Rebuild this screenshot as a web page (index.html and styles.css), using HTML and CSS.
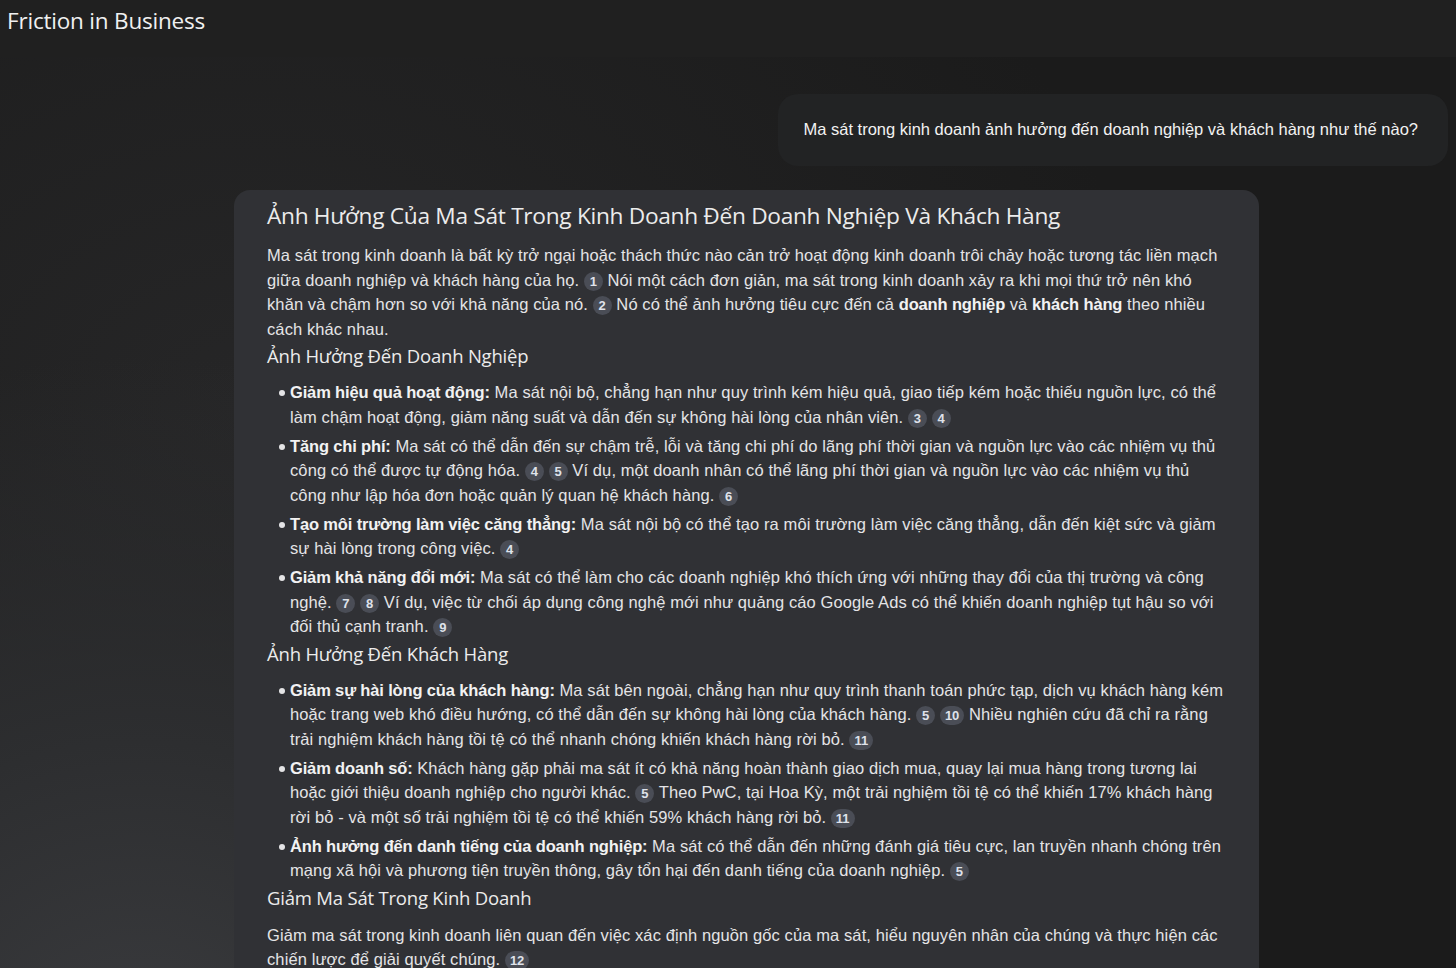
FILE: index.html
```html
<!DOCTYPE html>
<html lang="vi">
<head>
    <meta charset="UTF-8">
    <meta name="viewport" content="width=device-width, initial-scale=1.0">
    <title>Friction in Business</title>
    <link rel="stylesheet" href="styles.css">
</head>
<body>
    <header class="topbar">
        <h1 class="topbar-title">Friction in Business</h1>
    </header>

    <main class="chat">
        <div class="user-row">
            <div class="user-bubble">Ma sát trong kinh doanh ảnh hưởng đến doanh nghiệp và khách hàng như thế nào?</div>
        </div>

        <article class="answer">
            <h2 class="answer-title">Ảnh Hưởng Của Ma Sát Trong Kinh Doanh Đến Doanh Nghiệp Và Khách Hàng</h2>
            <p>Ma sát trong kinh doanh là bất kỳ trở ngại hoặc thách thức nào cản trở hoạt động kinh doanh trôi chảy hoặc tương tác liền mạch giữa doanh nghiệp và khách hàng của họ. <span class="cite">1</span> Nói một cách đơn giản, ma sát trong kinh doanh xảy ra khi mọi thứ trở nên khó khăn và chậm hơn so với khả năng của nó. <span class="cite">2</span> Nó có thể ảnh hưởng tiêu cực đến cả <b>doanh nghiệp</b> và <b>khách hàng</b> theo nhiều cách khác nhau.</p>

            <h3>Ảnh Hưởng Đến Doanh Nghiệp</h3>
            <ul>
                <li><b>Giảm hiệu quả hoạt động:</b> Ma sát nội bộ, chẳng hạn như quy trình kém hiệu quả, giao tiếp kém hoặc thiếu nguồn lực, có thể làm chậm hoạt động, giảm năng suất và dẫn đến sự không hài lòng của nhân viên. <span class="cite">3</span> <span class="cite">4</span></li>
                <li><b>Tăng chi phí:</b> Ma sát có thể dẫn đến sự chậm trễ, lỗi và tăng chi phí do lãng phí thời gian và nguồn lực vào các nhiệm vụ thủ công có thể được tự động hóa. <span class="cite">4</span> <span class="cite">5</span> Ví dụ, một doanh nhân có thể lãng phí thời gian và nguồn lực vào các nhiệm vụ thủ công như lập hóa đơn hoặc quản lý quan hệ khách hàng. <span class="cite">6</span></li>
                <li><b>Tạo môi trường làm việc căng thẳng:</b> Ma sát nội bộ có thể tạo ra môi trường làm việc căng thẳng, dẫn đến kiệt sức và giảm sự hài lòng trong công việc. <span class="cite">4</span></li>
                <li><b>Giảm khả năng đổi mới:</b> Ma sát có thể làm cho các doanh nghiệp khó thích ứng với những thay đổi của thị trường và công nghệ. <span class="cite">7</span> <span class="cite">8</span> Ví dụ, việc từ chối áp dụng công nghệ mới như quảng cáo Google Ads có thể khiến doanh nghiệp tụt hậu so với đối thủ cạnh tranh. <span class="cite">9</span></li>
            </ul>

            <h3>Ảnh Hưởng Đến Khách Hàng</h3>
            <ul>
                <li><b>Giảm sự hài lòng của khách hàng:</b> Ma sát bên ngoài, chẳng hạn như quy trình thanh toán phức tạp, dịch vụ khách hàng kém hoặc trang web khó điều hướng, có thể dẫn đến sự không hài lòng của khách hàng. <span class="cite">5</span> <span class="cite">10</span> Nhiều nghiên cứu đã chỉ ra rằng trải nghiệm khách hàng tồi tệ có thể nhanh chóng khiến khách hàng rời bỏ. <span class="cite">11</span></li>
                <li><b>Giảm doanh số:</b> Khách hàng gặp phải ma sát ít có khả năng hoàn thành giao dịch mua, quay lại mua hàng trong tương lai hoặc giới thiệu doanh nghiệp cho người khác. <span class="cite">5</span> Theo PwC, tại Hoa Kỳ, một trải nghiệm tồi tệ có thể khiến 17% khách hàng rời bỏ - và một số trải nghiệm tồi tệ có thể khiến 59% khách hàng rời bỏ. <span class="cite">11</span></li>
                <li><b>Ảnh hưởng đến danh tiếng của doanh nghiệp:</b> Ma sát có thể dẫn đến những đánh giá tiêu cực, lan truyền nhanh chóng trên mạng xã hội và phương tiện truyền thông, gây tổn hại đến danh tiếng của doanh nghiệp. <span class="cite">5</span></li>
            </ul>

            <h3>Giảm Ma Sát Trong Kinh Doanh</h3>
            <p class="after-heading">Giảm ma sát trong kinh doanh liên quan đến việc xác định nguồn gốc của ma sát, hiểu nguyên nhân của chúng và thực hiện các chiến lược để giải quyết chúng. <span class="cite">12</span></p>
        </article>
    </main>
</body>
</html>
```

FILE: styles.css
```css
html, body {
    margin: 0;
    height: 100%;
    overflow: hidden;
}
body {
    font-family: "Liberation Sans", Arial, sans-serif;
    background-color: #1b1b1b;
    color: #e4e4e6;
}
.topbar {
    height: 57px;
    background: #202020;
    display: flex;
    align-items: flex-start;
    padding: 0 7px;
}
.topbar-title {
    margin: 5px 0 0;
    font-family: "Open Sans", sans-serif;
    font-weight: 400;
    font-size: 22.5px;
    letter-spacing: -0.2px;
    color: #f0f0f0;
}
.chat {
    min-height: calc(100% - 57px);
    background:
        radial-gradient(ellipse 760px 700px at 140px 1000px, #3a3b3e 0%, #2d2e30 45%, rgba(27,27,27,0) 100%),
        radial-gradient(ellipse 900px 700px at 250px 350px, #262627 0%, rgba(27,27,27,0) 100%),
        #1b1b1b;
    padding-top: 37px;
}
.user-row {
    display: flex;
    justify-content: flex-end;
    padding-right: 8px;
}
.user-bubble {
    background: #222324;
    border-radius: 20px;
    padding: 26px 30px 27px 25px;
    font-size: 16.5px;
    line-height: 19px;
    color: #f2f2f2;
}
.answer {
    width: 959px;
    margin: 24px 0 0 234px;
    padding: 10px 33px 20px;
    background: #303135;
    border-radius: 16px 16px 0 0;
    font-size: 16.5px;
    letter-spacing: 0.1px;
    line-height: 24.5px;
}
.answer-title {
    margin: 0 0 11px;
    font-family: "Open Sans", sans-serif;
    font-weight: 400;
    font-size: 22.7px;
    line-height: 32px;
    letter-spacing: -0.3px;
    color: #ececec;
}
.answer h3 {
    margin: 0;
    font-family: "Open Sans", sans-serif;
    font-weight: 400;
    font-size: 18.5px;
    line-height: 30px;
    letter-spacing: -0.2px;
    color: #ececec;
}
.answer p {
    margin: 0;
}
.answer p.after-heading {
    margin-top: 10px;
}
.answer ul {
    margin: 9px 0 0;
    padding-left: 23px;
    list-style: none;
}
.answer li {
    position: relative;
    margin-bottom: 4.5px;
}
.answer li:last-child {
    margin-bottom: 0;
}
.answer li::before {
    content: "";
    position: absolute;
    left: -11px;
    top: 10px;
    width: 6px;
    height: 6px;
    border-radius: 50%;
    background: #e4e4e6;
}
.answer b {
    font-weight: 700;
    letter-spacing: -0.15px;
    color: #f2f2f2;
}
.cite {
    display: inline-block;
    min-width: 19px;
    height: 19px;
    padding: 0 5px;
    box-sizing: border-box;
    border-radius: 10px;
    background: #4a4d56;
    color: #dfe2ea;
    font-size: 13px;
    font-weight: 700;
    letter-spacing: 0;
    line-height: 19px;
    text-align: center;
    vertical-align: baseline;
}
```
